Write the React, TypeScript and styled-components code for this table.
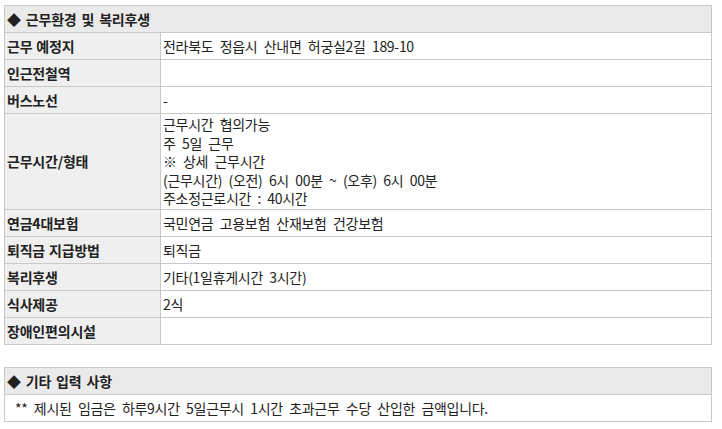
import React from "react";
import styled, { createGlobalStyle } from "styled-components";

const GlobalStyle = createGlobalStyle`
  html, body {
    margin: 0;
    padding: 0;
    background: #fff;
  }
  body {
    font-family: "Noto Sans CJK KR", "Noto Sans", sans-serif;
    color: #222;
  }
`;

const Page = styled.div`
  padding: 5px 10px 0 4px;
  display: flex;
  flex-direction: column;
  gap: 22px;
`;

const Table = styled.table`
  width: 100%;
  border-collapse: collapse;
  table-layout: fixed;
`;

const HeadCell = styled.th`
  height: 26px;
  padding: 0 2px;
  text-align: left;
  font-size: 14px;
  font-weight: 700;
  letter-spacing: -0.2px;
  word-spacing: 2px;
  line-height: 18px;
  background: #eaeaea;
  border: 1px solid #c9c9c9;
`;

const Label = styled.th`
  height: 24px;
  padding: 1px 2px;
  text-align: left;
  font-size: 14px;
  font-weight: 700;
  letter-spacing: -0.2px;
  word-spacing: 1px;
  line-height: 18.6px;
  background: #efefef;
  border: 1px solid #c9c9c9;
`;

const Value = styled.td<{ $pad?: number }>`
  height: 24px;
  padding: 1px ${(p) => p.$pad ?? 2}px;
  font-size: 14px;
  font-weight: 400;
  letter-spacing: -0.3px;
  word-spacing: 3.5px;
  line-height: 18.6px;
  border: 1px solid #c9c9c9;
`;

const Line = styled.div``;

const rows: { label: string; value: string[] }[] = [
  { label: "근무 예정지", value: ["전라북도 정읍시 산내면 허궁실2길 189-10"] },
  { label: "인근전철역", value: [] },
  { label: "버스노선", value: ["-"] },
  {
    label: "근무시간/형태",
    value: [
      "근무시간 협의가능",
      "주 5일 근무",
      "※ 상세 근무시간",
      "(근무시간) (오전) 6시 00분 ~ (오후) 6시 00분",
      "주소정근로시간 : 40시간",
    ],
  },
  { label: "연금4대보험", value: ["국민연금 고용보험 산재보험 건강보험"] },
  { label: "퇴직금 지급방법", value: ["퇴직금"] },
  { label: "복리후생", value: ["기타(1일휴게시간 3시간)"] },
  { label: "식사제공", value: ["2식"] },
  { label: "장애인편의시설", value: [] },
];

export default function App() {
  return (
    <>
      <GlobalStyle />
      <Page>
        <Table>
          <colgroup>
            <col style={{ width: 156 }} />
            <col />
          </colgroup>
          <thead>
            <tr>
              <HeadCell colSpan={2}>◆ 근무환경 및 복리후생</HeadCell>
            </tr>
          </thead>
          <tbody>
            {rows.map((r) => (
              <tr key={r.label}>
                <Label>{r.label}</Label>
                <Value>
                  {r.value.map((v) => (
                    <Line key={v}>{v}</Line>
                  ))}
                </Value>
              </tr>
            ))}
          </tbody>
        </Table>
        <Table>
          <thead>
            <tr>
              <HeadCell>◆ 기타 입력 사항</HeadCell>
            </tr>
          </thead>
          <tbody>
            <tr>
              <Value $pad={10}>
                ** 제시된 임금은 하루9시간 5일근무시 1시간 초과근무 수당 산입한 금액입니다.
              </Value>
            </tr>
          </tbody>
        </Table>
      </Page>
    </>
  );
}
